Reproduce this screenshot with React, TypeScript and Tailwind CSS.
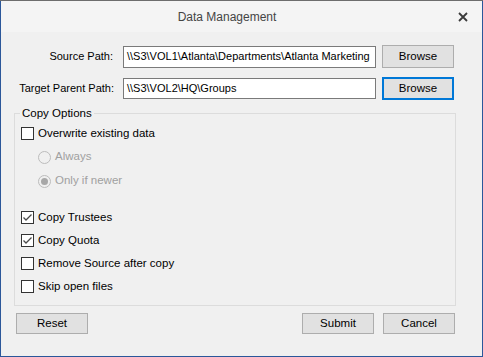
import React, { useState } from 'react';

const font = { fontFamily: '"Segoe UI", "Liberation Sans", Arial, sans-serif' };

function CheckBox({ checked, label, onToggle }: { checked: boolean; label: string; onToggle: () => void }) {
  return (
    <div className="flex h-[23px] items-center cursor-default" onClick={onToggle}>
      <div className="ml-[6px] flex h-[13px] w-[13px] items-center justify-center border border-[#333333] bg-white">
        {checked && (
          <svg width="11" height="11" viewBox="0 0 11 11">
            <path d="M1.5 5.5 L4 8 L9.5 2.5" fill="none" stroke="#4a4a4a" strokeWidth="1.3" />
          </svg>
        )}
      </div>
      <span className="ml-[4px] text-[11.5px] text-black">{label}</span>
    </div>
  );
}

function Radio({ selected, label }: { selected: boolean; label: string }) {
  return (
    <div className="flex h-[24px] items-center">
      <div className="ml-[23px] flex h-[13px] w-[13px] items-center justify-center rounded-full border border-[#bcbcbc] bg-[#f0f0f0]">
        {selected && <div className="h-[7px] w-[7px] rounded-full bg-[#a8a8a8]" />}
      </div>
      <span className="ml-[4px] text-[11.5px] text-[#a0a0a0]">{label}</span>
    </div>
  );
}

function Button({ children, focused, className = '' }: { children: React.ReactNode; focused?: boolean; className?: string }) {
  return (
    <button
      className={
        (focused
          ? 'block w-[72px] border-2 border-[#0078d7] bg-[#e1e1e1] text-[11.5px] text-black '
          : 'block w-[72px] border border-[#adadad] bg-[#e1e1e1] text-[11.5px] text-black ') + className
      }
    >
      {children}
    </button>
  );
}

export default function App() {
  const [overwrite, setOverwrite] = useState(false);
  const [trustees, setTrustees] = useState(true);
  const [quota, setQuota] = useState(true);
  const [removeSource, setRemoveSource] = useState(false);
  const [skipOpen, setSkipOpen] = useState(false);

  return (
    <div className="h-[357px] w-[483px] overflow-hidden bg-[#6d6d6d] pt-px" style={font}>
      <div className="flex h-[356px] flex-col border border-t-0 border-[#2b579a] bg-[#f0f0f0]">
        {/* title bar */}
        <div className="flex h-[31px] items-center bg-[#f4f4f4]">
          <div className="flex-1 text-center text-[12px] text-[#444444]">Data Management</div>
          <div className="flex w-[29px] items-center pl-[5px]">
            <svg width="10" height="10" viewBox="0 0 10 10">
              <path d="M1 1 L9 9 M9 1 L1 9" stroke="#3a3a3a" strokeWidth="1.8" />
            </svg>
          </div>
        </div>

        {/* paths */}
        <div className="mt-[13px] flex items-center">
          <div className="w-[112px] text-right text-[11px] text-black">Source Path:</div>
          <div className="ml-[10px] flex h-[22px] w-[253px] items-center overflow-hidden whitespace-nowrap border border-[#7a7a7a] bg-white pl-[3px] text-[11px] text-black">
            \\S3\VOL1\Atlanta\Departments\Atlanta Marketing
          </div>
          <Button className="ml-[6px] h-[23px]">Browse</Button>
        </div>
        <div className="mt-[9px] flex items-center">
          <div className="w-[113px] text-right text-[11px] text-black">Target Parent Path:</div>
          <div className="ml-[9px] flex h-[21px] w-[253px] items-center overflow-hidden whitespace-nowrap border border-[#7a7a7a] bg-white pl-[3px] text-[11px] text-black">
            \\S3\VOL2\HQ\Groups
          </div>
          <Button focused className="ml-[6px] h-[23px]">Browse</Button>
        </div>

        {/* copy options */}
        <fieldset className="ml-[13px] mr-[26px] mt-[6px] h-[200px] border border-[#dcdcdc]">
          <legend className="ml-[5px] px-[2px] text-[11.5px] leading-[15px] text-black">Copy Options</legend>
          <div className="mt-[1px]">
            <CheckBox checked={overwrite} label="Overwrite existing data" onToggle={() => setOverwrite(!overwrite)} />
            <Radio selected={false} label="Always" />
            <Radio selected={true} label="Only if newer" />
          </div>
          <div className="mt-[13px]">
            <CheckBox checked={trustees} label="Copy Trustees" onToggle={() => setTrustees(!trustees)} />
            <CheckBox checked={quota} label="Copy Quota" onToggle={() => setQuota(!quota)} />
            <CheckBox checked={removeSource} label="Remove Source after copy" onToggle={() => setRemoveSource(!removeSource)} />
            <CheckBox checked={skipOpen} label="Skip open files" onToggle={() => setSkipOpen(!skipOpen)} />
          </div>
        </fieldset>

        {/* footer */}
        <div className="mt-[7px] flex items-center pl-[15px] pr-[27px]">
          <Button className="h-[21px]">Reset</Button>
          <div className="flex-1" />
          <Button className="h-[21px]">Submit</Button>
          <Button className="ml-[9px] h-[21px]">Cancel</Button>
        </div>
      </div>
    </div>
  );
}
